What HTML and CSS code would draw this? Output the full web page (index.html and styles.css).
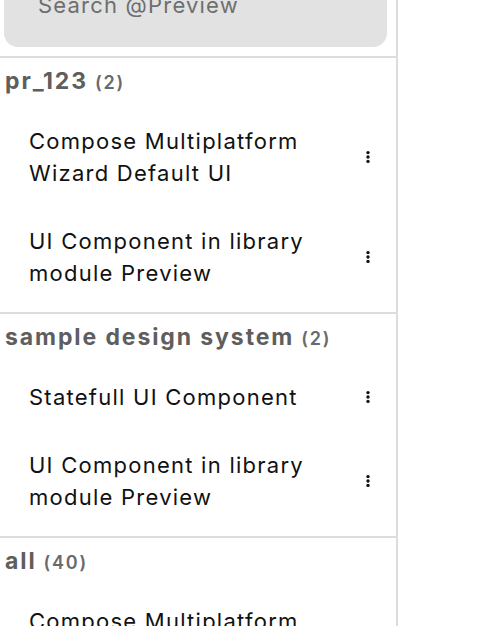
FILE: index.html
```html
<!DOCTYPE html>
<html>
<head>
<meta charset="utf-8">
<link rel="stylesheet" href="styles.css">
</head>
<body>
<div class="panel">
  <div class="search"><span class="placeholder">Search @Preview</span></div>
  <div class="divider"></div>

  <div class="section">
    <div class="header"><span class="name">pr_123</span><span class="count">(2)</span></div>
    <div class="item"><span class="title">Compose Multiplatform<br>Wizard Default UI</span><svg class="kebab" viewBox="0 0 18 18"><circle cx="9" cy="4.6" r="1.7"/><circle cx="9" cy="9" r="1.7"/><circle cx="9" cy="13.4" r="1.7"/></svg></div>
    <div class="item"><span class="title">UI Component in library<br>module Preview</span><svg class="kebab" viewBox="0 0 18 18"><circle cx="9" cy="4.6" r="1.7"/><circle cx="9" cy="9" r="1.7"/><circle cx="9" cy="13.4" r="1.7"/></svg></div>
  </div>
  <div class="divider"></div>

  <div class="section">
    <div class="header"><span class="name">sample design system</span><span class="count">(2)</span></div>
    <div class="item"><span class="title">Statefull UI Component</span><svg class="kebab" viewBox="0 0 18 18"><circle cx="9" cy="4.6" r="1.7"/><circle cx="9" cy="9" r="1.7"/><circle cx="9" cy="13.4" r="1.7"/></svg></div>
    <div class="item"><span class="title">UI Component in library<br>module Preview</span><svg class="kebab" viewBox="0 0 18 18"><circle cx="9" cy="4.6" r="1.7"/><circle cx="9" cy="9" r="1.7"/><circle cx="9" cy="13.4" r="1.7"/></svg></div>
  </div>
  <div class="divider"></div>

  <div class="section">
    <div class="header"><span class="name">all</span><span class="count">(40)</span></div>
    <div class="item"><span class="title">Compose Multiplatform<br>Wizard Default UI</span><svg class="kebab" viewBox="0 0 18 18"><circle cx="9" cy="4.6" r="1.7"/><circle cx="9" cy="9" r="1.7"/><circle cx="9" cy="13.4" r="1.7"/></svg></div>
  </div>
</div>
</body>
</html>
```

FILE: styles.css
```css
* { box-sizing: border-box; }
html, body {
  margin: 0;
  padding: 0;
  background: #ffffff;
  height: 100%;
  overflow: hidden;
}
body {
  font-family: Inter, "Noto Sans", "Liberation Sans", sans-serif;
  color: #1a1a1a;
}
.panel {
  width: 398px;
  height: 626px;
  border-right: 2px solid #dddddd;
  overflow: hidden;
}
.search {
  margin: -20px 9px 0 4px;
  height: 67px;
  background: #e2e2e2;
  border-radius: 14px;
  padding: 11px 0 0 34px;
}
.placeholder {
  font-size: 22px;
  line-height: 28px;
  color: #6e6e6e;
  letter-spacing: 1.2px;
}
.divider {
  height: 2px;
  background: #dddddd;
  margin-top: 9px;
}
.section + .divider { margin-top: 5px; }
.header {
  display: flex;
  align-items: baseline;
  gap: 7px;
  height: 49px;
  padding: 9px 0 0 5px;
  line-height: 28px;
  color: #5e5e5e;
}
.name {
  font-size: 23px;
  font-weight: 700;
  letter-spacing: 1.9px;
}
.count {
  font-size: 18px;
  font-weight: 600;
  color: #6a6a6a;
  letter-spacing: 1.8px;
}
.item {
  display: flex;
  align-items: center;
  padding: 18px 19px 18px 29px;
}
.title {
  flex: 1;
  font-size: 22px;
  line-height: 32px;
  letter-spacing: 1.25px;
  color: #111111;
}
.kebab {
  width: 18px;
  height: 18px;
  fill: #111111;
  flex: none;
}
```
